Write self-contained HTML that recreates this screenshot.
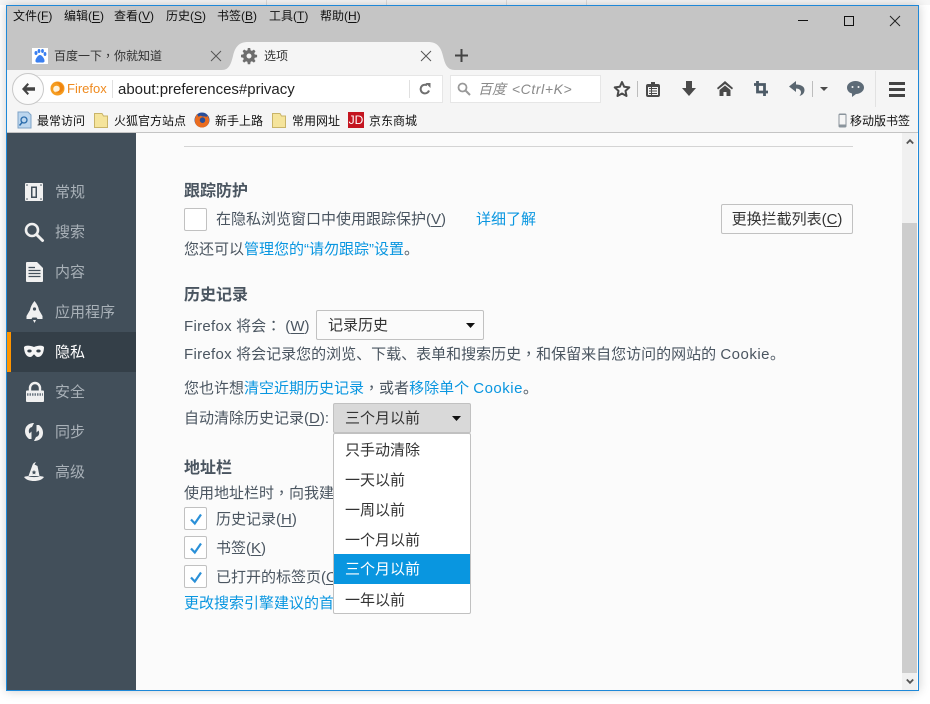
<!DOCTYPE html>
<html><head><meta charset="utf-8"><style>
html,body{margin:0;padding:0;width:930px;height:704px;overflow:hidden;background:#fff}
body{position:relative;font-family:"Liberation Sans","Noto Sans CJK SC",sans-serif;color:#424e5a}
.a{position:absolute;white-space:nowrap}
.t{font-size:15px;line-height:20px;height:20px;color:#4a5560}
.h{font-size:16px;line-height:22px;font-weight:bold;color:#4a5560}
.l{color:#0996e0}
.p{font-family:"Liberation Sans","Noto Sans CJK TC",sans-serif}
.w{letter-spacing:.3px}
.c{letter-spacing:.5px}
u{text-underline-offset:2px}
.m{font-size:12px;line-height:16px;color:#111}
.nav{position:absolute;left:55px;font-size:15px;line-height:20px;color:#a9b1b8}
.cb{position:absolute;left:184px;width:21px;height:21px;border:1px solid #c1c1c1;border-radius:2px;background:#fff}
.opt{position:absolute;left:1px;width:136px;height:30px;line-height:32px;font-size:15px;color:#333;padding-left:11px;box-sizing:border-box}
svg{position:absolute;overflow:visible}
</style></head><body>
<div class="a" style="left:0;top:0;width:930px;height:5px;background:#f6f6f6"></div>
<div class="a" style="left:266px;top:0;width:1px;height:5px;background:#ddd"></div>
<div class="a" style="left:386px;top:0;width:1px;height:5px;background:#ddd"></div>
<div class="a" style="left:506px;top:0;width:1px;height:5px;background:#ddd"></div>
<div class="a" style="left:586px;top:0;width:1px;height:5px;background:#ddd"></div>
<!-- window -->
<div class="a" style="left:6px;top:5px;width:913px;height:686px;box-sizing:border-box;border:1px solid #1e88d8;background:#fbfbfb;box-shadow:0 0 10px rgba(0,0,0,.2)"></div>
<div class="a" style="left:7px;top:6px;width:911px;height:64px;background:#c5c5c5"></div>
<div class="a" style="left:7px;top:70px;width:911px;height:63px;background:#f5f5f5"></div>
<div class="a" style="left:7px;top:132px;width:911px;height:1px;background:#c4c4c4"></div>
<!-- menu -->
<div class="a m" style="left:13px;top:8px">文件(<u>F</u>)</div>
<div class="a m" style="left:64px;top:8px">编辑(<u>E</u>)</div>
<div class="a m" style="left:114px;top:8px">查看(<u>V</u>)</div>
<div class="a m" style="left:166px;top:8px">历史(<u>S</u>)</div>
<div class="a m" style="left:217px;top:8px">书签(<u>B</u>)</div>
<div class="a m" style="left:269px;top:8px">工具(<u>T</u>)</div>
<div class="a m" style="left:320px;top:8px">帮助(<u>H</u>)</div>
<!-- window controls -->
<div class="a" style="left:798px;top:20px;width:10px;height:1px;background:#111"></div>
<div class="a" style="left:844px;top:16px;width:8px;height:8px;border:1px solid #111"></div>
<svg style="left:890px;top:16px" width="10" height="10"><path d="M0 0L10 10M10 0L0 10" stroke="#222" fill="none"/></svg>
<!-- tabs -->
<svg style="left:32px;top:48px" width="16" height="16"><rect width="16" height="16" fill="#fff"/><g fill="#3a7ff0"><ellipse cx="4" cy="5" rx="1.5" ry="2"/><ellipse cx="7" cy="3" rx="1.4" ry="2"/><ellipse cx="10.5" cy="3" rx="1.4" ry="2"/><ellipse cx="13" cy="6" rx="1.4" ry="2"/><path d="M8 7c-2 0-5 4-4.500 6.500C4 15 6 14.500 8 14.500s4 .5 4.500-1C13 11 10 7 8 7z"/></g></svg>
<div class="a" style="left:54px;top:47px;font-size:12px;line-height:18px;color:#333">百度一下<span class="p">，</span>你就知道</div>
<svg style="left:211px;top:51px" width="10" height="10"><path d="M0 0L10 10M10 0L0 10" stroke="#555" fill="none"/></svg>
<svg style="left:222px;top:42px" width="233" height="28"><path d="M0 28C7 28 9 22 11 14 13 5 17 0 26 0H206C215 0 219 5 221 14 223 22 225 28 233 28Z" fill="#f5f5f5"/></svg>
<svg style="left:241px;top:48px" width="16" height="16" viewBox="0 0 16 16"><path d="M6.800 0h2.400l.4 2.300 1.300.6 2-1.300 1.600 1.600-1.300 2 .6 1.300 2.300.4v2.400l-2.300.4-.6 1.300 1.300 2-1.600 1.600-2-1.300-1.300.6-.4 2.300H6.800l-.4-2.300-1.300-.6-2 1.300-1.600-1.600 1.300-2-.6-1.300L0 9.200V6.800l2.300-.4.6-1.300-1.300-2 1.600-1.600 2 1.300 1.300-.6z M8 5.500a2.500 2.500 0 1 0 0 5 2.500 2.500 0 0 0 0-5z" fill="#6e6e6e" fill-rule="evenodd"/></svg>
<div class="a" style="left:264px;top:47px;font-size:12px;line-height:18px;color:#333">选项</div>
<svg style="left:421px;top:51px" width="10" height="10"><path d="M0 0L10 10M10 0L0 10" stroke="#555" fill="none"/></svg>
<svg style="left:455px;top:49px" width="13" height="13"><path d="M6.500 0V13M0 6.500H13" stroke="#444" stroke-width="2" fill="none"/></svg>
<!-- url bar -->
<div class="a" style="left:30px;top:75px;width:413px;height:28px;box-sizing:border-box;background:#fff;border:1px solid #e6e6e6"></div>
<div class="a" style="left:12px;top:73px;width:32px;height:32px;box-sizing:border-box;border-radius:50%;background:#fbfbfb;border:1px solid #c8c8c8"></div>
<svg style="left:21px;top:82px" width="14" height="14" viewBox="0 0 14 14"><path d="M6.500 1L1 7 6.500 13 8 11.500 5.500 8.800H14V5.200H5.500L8 2.500z" fill="#444"/></svg>
<svg style="left:50px;top:81px" width="15" height="15" viewBox="0 0 15 15"><circle cx="7.500" cy="7.500" r="7" fill="#f59c1f"/><circle cx="6.500" cy="8" r="3.300" fill="#fff3dc"/><path d="M5 1.500C9 2 11 5 9.500 9 8 11 6 11 5 10.500 9 14 14 10 13.500 6 12 2 8 .5 5 1.500z" fill="#ef8410"/></svg>
<div class="a" style="left:67px;top:81px;font-size:13px;line-height:16px;color:#ef8a1e">Firefox</div>
<div class="a" style="left:112px;top:80px;width:1px;height:18px;background:#e0e0e0"></div>
<div class="a" style="left:118px;top:80px;font-size:15px;line-height:20px;color:#222">about:preferences#privacy</div>
<div class="a" style="left:409px;top:80px;width:1px;height:18px;background:#e0e0e0"></div>
<svg style="left:419px;top:83px" width="12" height="12" viewBox="0 0 12 12"><path d="M10 7.500A4.300 4.300 0 1 1 8 2.300" stroke="#6f6f6f" stroke-width="2" fill="none"/><path d="M6.500 0H11.500V5z" fill="#6f6f6f"/></svg>
<!-- search -->
<div class="a" style="left:450px;top:75px;width:151px;height:28px;box-sizing:border-box;background:#fff;border:1px solid #e6e6e6"></div>
<svg style="left:457px;top:82px" width="14" height="14"><circle cx="5.500" cy="5.500" r="4" stroke="#999" stroke-width="1.800" fill="none"/><path d="M8.500 8.500L13 13" stroke="#999" stroke-width="2"/></svg>
<div class="a" style="left:478px;top:80px;font-size:14px;line-height:19px;font-style:italic;color:#8a8a8a;word-spacing:2px">百度 <span style="letter-spacing:.6px">&lt;Ctrl+K&gt;</span></div>
<!-- toolbar icons -->
<svg style="left:613px;top:80px" width="18" height="18" viewBox="0 0 18 18"><path d="M9 2l2.200 4.800 5.100.6-3.800 3.500 1 5.100L9 13.500 4.500 16l1-5.100L1.700 7.400l5.100-.6z" stroke="#4a4a4a" stroke-width="2" fill="none" stroke-linejoin="round"/></svg>
<div class="a" style="left:637px;top:81px;width:1px;height:16px;background:#bdbdbd"></div>
<svg style="left:646px;top:81px" width="14" height="16" viewBox="0 0 14 16"><path d="M2 3H5V1H9V3H12Q14 3 14 5V14Q14 16 12 16H2Q0 16 0 14V5Q0 3 2 3ZM2 6V14H12V6Z" fill="#4a4a4a" fill-rule="evenodd"/><path d="M3 7.500H11M3 10H11M3 12.500H11M5.500 6V14" stroke="#4a4a4a"/></svg>
<svg style="left:682px;top:81px" width="14" height="15" viewBox="0 0 14 15"><path d="M4 0H10V7H14L7 15 0 7H4z" fill="#4a4a4a"/></svg>
<svg style="left:717px;top:81px" width="16" height="15" viewBox="0 0 16 15"><path d="M8 0L0 7 1 8.500 8 3 15 8.500 16 7z" fill="#4a4a4a"/><path d="M8 4.500L2.500 9V15H6.500V11H9.500V15H13.500V9z" fill="#4a4a4a"/></svg>
<svg style="left:754px;top:81px" width="14" height="15" viewBox="0 0 14 15"><path d="M3.500 0V11H14M0 3.500H10.500V15" stroke="#4c5a66" stroke-width="2.800" fill="none"/></svg>
<svg style="left:789px;top:81px" width="16" height="15" viewBox="0 0 16 15"><path d="M7 0L0 5.500 7 11V7.500C10 7.500 12 9 12 11.500 12 13 11 14 10.500 15 14 14 15.500 11.500 15.500 9 15.500 5.500 12 3.500 7 3.500z" fill="#5a6670"/></svg>
<div class="a" style="left:812px;top:81px;width:1px;height:16px;background:#bdbdbd"></div>
<svg style="left:820px;top:87px" width="8" height="4"><path d="M0 0H8L4 4z" fill="#4a4a4a"/></svg>
<svg style="left:847px;top:81px" width="17" height="16" viewBox="0 0 17 16"><path d="M8.500 0C13 0 17 2.800 17 6.500S13 13 9 13L5 16V12.500C2 11.800 0 9.500 0 6.500 0 2.800 4 0 8.500 0z" fill="#5d6b77"/><circle cx="5.500" cy="6" r="1" fill="#f5f5f5"/><circle cx="11.500" cy="6" r="1" fill="#f5f5f5"/></svg>
<div class="a" style="left:875px;top:71px;width:1px;height:36px;background:#e2e2e2"></div>
<div class="a" style="left:889px;top:82px;width:16px;height:3px;background:#444"></div>
<div class="a" style="left:889px;top:88px;width:16px;height:3px;background:#444"></div>
<div class="a" style="left:889px;top:94px;width:16px;height:3px;background:#444"></div>
<!-- bookmarks -->
<svg style="left:17px;top:112px" width="15" height="16" viewBox="0 0 15 16"><path d="M1 0H11L14 3V16H1z" fill="#bcd6ee" stroke="#7ea4c8"/><circle cx="7" cy="8" r="3" fill="none" stroke="#2b6cab" stroke-width="1.300"/><path d="M5 10.500L2.500 13.500" stroke="#2b6cab" stroke-width="1.500"/></svg>
<div class="a m" style="left:37px;top:113px">最常访问</div>
<svg style="left:94px;top:112px" width="14" height="16" viewBox="0 0 14 16"><path d="M.500 1.500H8L9.500 4H13.500V15.500H.500z" fill="#f5e49b" stroke="#c9b468"/></svg>
<div class="a m" style="left:114px;top:113px">火狐官方站点</div>
<svg style="left:194px;top:112px" width="16" height="16" viewBox="0 0 16 16"><circle cx="8" cy="8" r="7.500" fill="#2a4f9a"/><path d="M3 2C1 5 0 9 2 12.500 5 16.500 11 16.500 14 12.500 16 9 15 5 13 3.500 13.500 6 11 4 9 4.500 7 4 6 3 5 5 4 4 3.500 3 3 2z" fill="#ea6c1f"/><path d="M8 5.500C5.500 6 5 9 7 10.500 9.500 12 12 9.500 11 7 10.500 6 9 5 8 5.500z" fill="#2a4f9a"/></svg>
<div class="a m" style="left:215px;top:113px">新手上路</div>
<svg style="left:272px;top:112px" width="14" height="16" viewBox="0 0 14 16"><path d="M.500 1.500H8L9.500 4H13.500V15.500H.500z" fill="#f5e49b" stroke="#c9b468"/></svg>
<div class="a m" style="left:292px;top:113px">常用网址</div>
<div class="a" style="left:348px;top:112px;width:16px;height:16px;background:#c41520;color:#fff;font-size:12px;line-height:16px;text-align:center">JD</div>
<div class="a m" style="left:369px;top:113px">京东商城</div>
<svg style="left:838px;top:113px" width="9" height="15" viewBox="0 0 9 15"><rect x=".5" y=".5" width="8" height="14" rx="1.500" fill="#8a949c"/><rect x="1.500" y="2" width="6" height="9.500" fill="#f5f5f5"/></svg>
<div class="a m" style="left:850px;top:113px">移动版书签</div>
<!-- sidebar -->
<div class="a" style="left:7px;top:133px;width:129px;height:557px;background:#424f5a"></div>
<div class="a" style="left:7px;top:332px;width:129px;height:40px;background:#343f48"></div>
<div class="a" style="left:7px;top:332px;width:4px;height:40px;background:#ff9500"></div>
<div class="nav" style="top:183px">常规</div>
<div class="nav" style="top:223px">搜索</div>
<div class="nav" style="top:263px">内容</div>
<div class="nav" style="top:303px">应用程序</div>
<div class="nav" style="top:343px;color:#fff">隐私</div>
<div class="nav" style="top:383px">安全</div>
<div class="nav" style="top:423px">同步</div>
<div class="nav" style="top:463px">高级</div>
<!-- sidebar icons -->
<svg style="left:25px;top:183px" width="18" height="18" viewBox="0 0 18 18"><path d="M1 0H17Q18 0 18 1V17Q18 18 17 18H1Q0 18 0 17V1Q0 0 1 0ZM6 3.500V15H12V3.500ZM7.500 5H10.500V13.500H7.500Z" fill="#f0f0f0" fill-rule="evenodd"/><g fill="#424f5a"><circle cx="2" cy="2" r=".8"/><circle cx="16" cy="2" r=".8"/><circle cx="2" cy="16" r=".8"/><circle cx="16" cy="16" r=".8"/></g></svg>
<svg style="left:24px;top:222px" width="20" height="20" viewBox="0 0 20 20"><circle cx="8" cy="8" r="6" stroke="#f0f0f0" stroke-width="2.600" fill="none"/><path d="M12.500 12.500L18.500 18.500" stroke="#f0f0f0" stroke-width="3" stroke-linecap="round"/></svg>
<svg style="left:26px;top:262px" width="17" height="20" viewBox="0 0 17 20"><path d="M1 0H11L17 6V19Q17 20 16 20H1Q0 20 0 19V1Q0 0 1 0Z" fill="#f0f0f0"/><path d="M2.500 8.500H14.500M2.500 11.500H14.500M2.500 14.500H14.500" stroke="#424f5a" stroke-width="1.300"/><path d="M2.500 5.500H9" stroke="#424f5a" stroke-width="1.300"/></svg>
<svg style="left:26px;top:301px" width="17" height="22" viewBox="0 0 17 22"><path d="M8.500 0C11 3 12.500 6 13 9L16.500 15V18H11.500L10.500 16.500H6.500L5.500 18H.5V15L4 9C4.500 6 6 3 8.500 0Z" fill="#f0f0f0"/><circle cx="8.500" cy="8" r="1.600" fill="#424f5a"/><path d="M7 19H10L8.500 22z" fill="#f0f0f0"/></svg>
<svg style="left:24px;top:345px" width="20" height="13" viewBox="0 0 20 13"><path d="M0 2C2 0 6 .5 10 2 14 .5 18 0 20 2 20 7 18 12 14 12 11.500 12 11 9.500 10 9.500S8.500 12 6 12C2 12 0 7 0 2Z" fill="#f5f5f5"/><ellipse cx="5.500" cy="6" rx="2.200" ry="1.500" fill="#343f48"/><ellipse cx="14.500" cy="6" rx="2.200" ry="1.500" fill="#343f48"/></svg>
<svg style="left:26px;top:382px" width="18" height="20" viewBox="0 0 18 20"><path d="M4 9V6A5 5 0 0 1 14 6V9" stroke="#f0f0f0" stroke-width="2.400" fill="none"/><path d="M1 8.500H17Q18 8.500 18 9.500V19Q18 20 17 20H1Q0 20 0 19V9.500Q0 8.500 1 8.500Z" fill="#f0f0f0"/><path d="M1 12.500H17" stroke="#6d7882" stroke-width="2.500" stroke-dasharray="1.500 1"/></svg>
<svg style="left:24px;top:422px" width="20" height="20" viewBox="0 0 20 20"><path d="M5 17C1 14 0 9 2 5 4 2 7 1 10 1L8 5C5 5.500 4 9 5.500 11.500L7.500 9.500V17ZM15 3C19 6 20 11 18 15 16 18 13 19 10 19L12 15C15 14.500 16 11 14.500 8.500L12.500 10.500V3Z" fill="#f0f0f0"/></svg>
<svg style="left:24px;top:462px" width="20" height="19" viewBox="0 0 20 19"><path d="M12 0L10.500 2.500 13.500 4 15.500 14H4.500L8.500 3C9 1.500 10 .5 12 0Z" fill="#f0f0f0"/><path d="M0 15C2 14 3 14.500 4 14 7 15.500 13 15.500 16 14 17 14.500 18 14 20 15 18 18 14 19 10 19S2 18 0 15Z" fill="#f0f0f0"/><path d="M10 8l.7 1.500 1.600.2-1.200 1.100.3 1.600L10 11.600l-1.400.8.3-1.600-1.200-1.100 1.600-.2z" fill="#424f5a"/></svg>
<!-- content -->
<div class="a" style="left:184px;top:146px;width:669px;height:1px;background:#d4d4d4"></div>
<div class="a h" style="left:184px;top:181px">跟踪防护</div>
<div class="cb" style="top:208px"></div>
<div class="a t" style="left:216px;top:210px">在隐私浏览窗口中使用跟踪保护(<u>V</u>)</div>
<div class="a t l" style="left:476px;top:210px">详细了解</div>
<div class="a" style="left:721px;top:204px;width:132px;height:30px;box-sizing:border-box;border:1px solid #c1c1c1;border-radius:2px;background:#fbfbfb;font-size:15px;line-height:30px;text-align:center;color:#333">更换拦截列表(<u>C</u>)</div>
<div class="a t" style="left:184px;top:240px">您还可以<span class="l">管理您的“请勿跟踪”设置</span>。</div>
<div class="a h" style="left:184px;top:285px">历史记录</div>
<div class="a t" style="left:184px;top:317px"><span class="w">Firefox</span> 将会<span class="p">：</span> (<u>W</u>)</div>
<div class="a" style="left:316px;top:310px;width:168px;height:30px;box-sizing:border-box;border:1px solid #c1c1c1;border-radius:2px;background:#fbfbfb;font-size:15px;line-height:30px;padding-left:11px;color:#333">记录历史</div>
<svg style="left:466px;top:323px" width="9" height="5"><path d="M0 0H9L4.500 5z" fill="#111"/></svg>
<div class="a t" style="left:184px;top:345px"><span class="w">Firefox</span> 将会记录您的浏览、下载、表单和搜索历史<span class="p">，</span>和保留来自您访问的网站的 <span class="c">Cookie</span>。</div>
<div class="a t" style="left:184px;top:379px">您也许想<span class="l">清空近期历史记录</span><span class="p">，</span>或者<span class="l">移除单个 <span class="c">Cookie</span></span>。</div>
<div class="a t" style="left:184px;top:409px">自动清除历史记录(<u>D</u>):</div>
<div class="a" style="left:333px;top:403px;width:138px;height:30px;box-sizing:border-box;border:1px solid #c1c1c1;border-radius:2px;background:#d9d9d9;font-size:15px;line-height:30px;padding-left:11px;color:#333">三个月以前</div>
<svg style="left:452px;top:416px" width="9" height="5"><path d="M0 0H9L4.500 5z" fill="#111"/></svg>
<div class="a h" style="left:184px;top:458px">地址栏</div>
<div class="a t" style="left:184px;top:484px">使用地址栏时<span class="p">，</span>向我建议</div>
<div class="cb" style="top:507px"></div>
<div class="a t" style="left:216px;top:510px">历史记录(<u>H</u>)</div>
<div class="cb" style="top:536px"></div>
<div class="a t" style="left:216px;top:539px">书签(<u>K</u>)</div>
<div class="cb" style="top:565px"></div>
<div class="a t" style="left:216px;top:568px">已打开的标签页(<u>O</u>)</div>
<div class="a t l" style="left:184px;top:594px">更改搜索引擎建议的首选项</div>
<svg style="left:190px;top:513px" width="12" height="12"><path d="M1 6.500L4.800 10.500 11 1.500" stroke="#2a90d8" stroke-width="2.200" fill="none"/></svg>
<svg style="left:190px;top:542px" width="12" height="12"><path d="M1 6.500L4.800 10.500 11 1.500" stroke="#2a90d8" stroke-width="2.200" fill="none"/></svg>
<svg style="left:190px;top:571px" width="12" height="12"><path d="M1 6.500L4.800 10.500 11 1.500" stroke="#2a90d8" stroke-width="2.200" fill="none"/></svg>
<!-- dropdown -->
<div class="a" style="left:333px;top:433px;width:138px;height:181px;box-sizing:border-box;border:1px solid #c1c1c1;border-radius:2px;background:#fff"></div>
<div class="a" style="left:333px;top:433px;width:138px;height:181px">
<div class="opt" style="top:2px">只手动清除</div>
<div class="opt" style="top:32px">一天以前</div>
<div class="opt" style="top:62px">一周以前</div>
<div class="opt" style="top:92px">一个月以前</div>
<div class="opt" style="top:121px;background:#0996e0;color:#fff">三个月以前</div>
<div class="opt" style="top:151px;height:30px;line-height:34px">一年以前</div>
</div>
<!-- scrollbar -->
<div class="a" style="left:902px;top:133px;width:15px;height:557px;background:#f0f0f0"></div>
<div class="a" style="left:902px;top:223px;width:15px;height:450px;background:#cdcdcd"></div>
<svg style="left:906px;top:139px" width="8" height="5"><path d="M.8 4.500L4 1.200 7.200 4.500" stroke="#555" stroke-width="1.800" fill="none"/></svg>
<svg style="left:906px;top:679px" width="8" height="5"><path d="M.8 .5L4 3.800 7.200 .5" stroke="#555" stroke-width="1.800" fill="none"/></svg>
</body></html>
